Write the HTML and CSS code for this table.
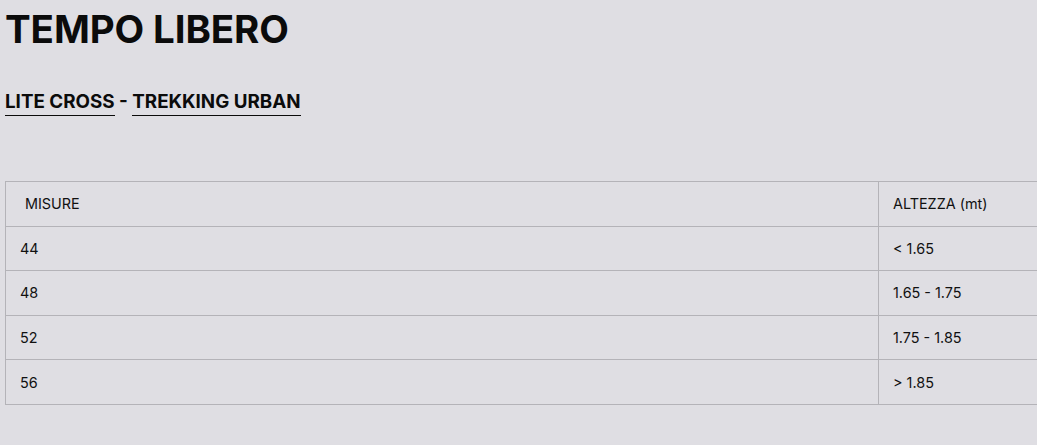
FILE: index.html
```html
<!DOCTYPE html>
<html lang="it">
<head>
<meta charset="utf-8">
<title>Tempo Libero</title>
<link rel="stylesheet" href="styles.css">
</head>
<body>
<main class="page">
  <h1 class="title">TEMPO LIBERO</h1>
  <h2 class="subtitle"><a class="sublink" href="#">LITE CROSS</a> - <a class="sublink" href="#">TREKKING URBAN</a></h2>
  <table class="sizes">
    <thead>
      <tr><th class="col-size">MISURE</th><th class="col-height">ALTEZZA (mt)</th></tr>
    </thead>
    <tbody>
      <tr><td class="col-size">44</td><td class="col-height">&lt; 1.65</td></tr>
      <tr><td class="col-size">48</td><td class="col-height">1.65 - 1.75</td></tr>
      <tr><td class="col-size">52</td><td class="col-height">1.75 - 1.85</td></tr>
      <tr><td class="col-size">56</td><td class="col-height">&gt; 1.85</td></tr>
    </tbody>
  </table>
</main>
</body>
</html>
```

FILE: styles.css
```css
html, body {
  margin: 0;
  padding: 0;
  background: #dfdee3;
  overflow: hidden;
}
body {
  font-family: Inter, "Liberation Sans", sans-serif;
  color: #0b0b0b;
}
.page {
  padding: 0 0 0 5px;
}
.title {
  margin: 0;
  padding-top: 7px;
  font-size: 38.5px;
  font-weight: 700;
  line-height: 44px;
  letter-spacing: -0.1px;
}
.subtitle {
  margin: 39px 0 0;
  font-size: 18.8px;
  font-weight: 700;
  line-height: 24px;
  letter-spacing: 0;
}
.sublink {
  color: #0b0b0b;
  text-decoration: none;
  border-bottom: 1px solid #0b0b0b;
  padding-bottom: 2px;
}
.sizes {
  margin-top: 67px;
  width: 1060px;
  border-collapse: collapse;
  font-size: 14.4px;
  color: #111;
}
.sizes th, .sizes td {
  border: 1px solid #b4b3b8;
  height: 44.6px;
  padding: 0;
  text-align: left;
  font-weight: 400;
  box-sizing: border-box;
}
.sizes .col-size {
  width: 873px;
  padding-left: 14px;
}
.sizes th.col-size {
  padding-left: 19px;
}
.sizes .col-height {
  padding-left: 14px;
}
```
